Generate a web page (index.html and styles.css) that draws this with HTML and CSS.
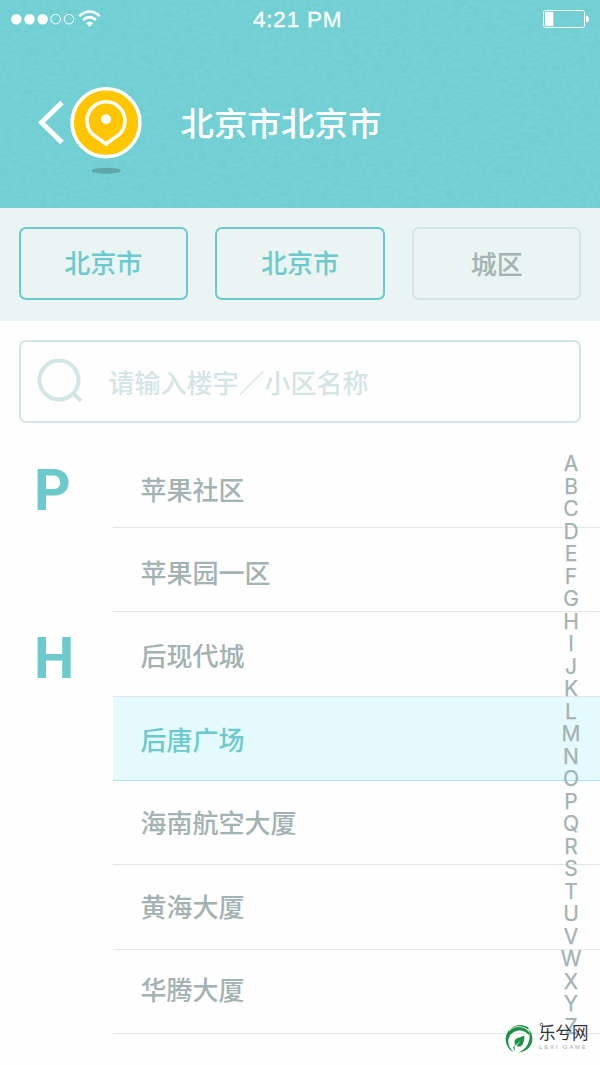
FILE: index.html
```html
<!DOCTYPE html>
<html lang="zh-CN">
<head>
<meta charset="utf-8">
<title>北京市北京市</title>
<link rel="stylesheet" href="styles.css">
</head>
<body>
<header class="header">
  <svg class="texture" width="600" height="208" aria-hidden="true">
    <filter id="fabric" x="0" y="0" width="100%" height="100%" color-interpolation-filters="sRGB">
      <feTurbulence type="fractalNoise" baseFrequency="0.15 0.3" numOctaves="3" seed="4"/>
      <feColorMatrix values="0 0 0 0 0.25  0 0 0 0 0.6  0 0 0 0 0.62  0.2 0 0 0 -0.07"/>
    </filter>
    <rect width="600" height="208" filter="url(#fabric)"/>
  </svg>
  <div class="status">
    <svg class="signal" width="104" height="20" viewBox="0 0 104 20">
      <g fill="#fff"><circle cx="16.3" cy="10.2" r="5.2"/><circle cx="29.5" cy="10.2" r="5.2"/><circle cx="42.7" cy="10.2" r="5.2"/></g>
      <g fill="none" stroke="#fff"><circle cx="55.7" cy="10.2" r="4.8"/><circle cx="69" cy="10.2" r="4.8"/></g>
      <g fill="none" stroke="#fff" stroke-width="2.5"><path d="M79.2 7.2Q89.5-2.2 99.8 7.2"/><path d="M83.1 11Q89.5 5.2 95.9 11"/></g>
      <path d="M86 14Q89.500 11.500 93 14L89.500 18Z" fill="#fff"/>
    </svg>
    <span class="time">4:21 PM</span>
    <svg class="battery" width="48" height="20" viewBox="0 0 48 20">
      <rect x="1.5" y="1.5" width="41" height="17" rx="2" fill="none" stroke="#fff"/>
      <rect x="3" y="3" width="8.3" height="14" fill="#fff"/>
      <path d="M44 6.5Q47 7 47 10T44 13.500Z" fill="#fff"/>
    </svg>
  </div>
  <div class="heading">
    <svg class="pin" width="110" height="92" viewBox="0 0 110 92">
      <path d="M26 18.500L5.500 38.500L26 58.500" fill="none" stroke="#fff" stroke-width="5"/>
      <circle cx="70" cy="38.700" r="33.900" fill="#ffc600" stroke="#fff" stroke-width="3.600"/>
      <path d="M70 60L56.800 50.500A19 19 0 1 1 83.200 50.500Z" fill="none" stroke="#fff" stroke-width="3.500"/>
      <circle cx="70" cy="35.300" r="5" fill="#fff"/>
      <ellipse cx="70.400" cy="86.700" rx="14.500" ry="3" fill="#60a5a8"/>
    </svg>
    <h1 class="title">北京市北京市</h1>
  </div>
</header>
<nav class="filters">
  <div class="filter">北京市</div>
  <div class="filter">北京市</div>
  <div class="filter filter-empty">城区</div>
</nav>
<main class="content">
  <div class="search">
    <svg class="lens" width="48" height="48" viewBox="0 0 48 48" fill="none" stroke="#d3e5e5" stroke-width="4"><circle cx="22" cy="22" r="19.500"/><path d="M35.500 34.500L44 43"/></svg>
    <span>请输入楼宇／小区名称</span>
  </div>
  <div class="places">
    <div class="row"><b class="initial">P</b><div class="place">苹果社区</div></div>
    <div class="row"><b class="initial"></b><div class="place">苹果园一区</div></div>
    <div class="row"><b class="initial">H</b><div class="place">后现代城</div></div>
    <div class="row"><b class="initial"></b><div class="place selected">后唐广场</div></div>
    <div class="row"><b class="initial"></b><div class="place">海南航空大厦</div></div>
    <div class="row"><b class="initial"></b><div class="place">黄海大厦</div></div>
    <div class="row"><b class="initial"></b><div class="place">华腾大厦</div></div>
  </div>
</main>
<aside class="index">
  <span>A</span><span>B</span><span>C</span><span>D</span><span>E</span><span>F</span><span>G</span><span>H</span><span>I</span><span>J</span><span>K</span><span>L</span><span>M</span><span>N</span><span>O</span><span>P</span><span>Q</span><span>R</span><span>S</span><span>T</span><span>U</span><span>V</span><span>W</span><span>X</span><span>Y</span><span>Z</span>
</aside>
<div class="brand">
  <svg width="32" height="32" viewBox="0 0 32 32">
    <path d="M26.500 5.500A14.500 14.500 0 1 0 12 30.500C4 24 4.500 13 13 9.500C19 7 25 10 27.500 14C28 10 26 7.500 22 6Q25 6 26.500 8Z" fill="#1d9245"/>
    <path d="M7 9C12 3 21 3 27 9" fill="none" stroke="#fefefe" stroke-width=".8"/>
    <path d="M27 7.500C34 16 30 30 16 30.500C27 27 29 16 27 7.500Z" fill="#1d9245"/>
    <path d="M22.500 13.500C22 25 18 25.500 14.500 24L18.500 18.500L13.500 23.500C10 15.500 17 16.500 22.500 13.500ZM13.500 23Q11.500 25 13.500 29.500Q9 25 13.500 23Z" fill="#1d9245"/>
  </svg>
  <div class="brand-text">
    <svg class="brand-dot" width="5" height="5" viewBox="0 0 5 5"><circle cx="2.500" cy="2.500" r="1.300" fill="none" stroke="#444" stroke-width=".8"/></svg>
    <span class="brand-name">乐兮网</span>
    <span class="brand-sub">LEXI GAME</span>
  </div>
</div>
</body>
</html>
```
FILE: styles.css
```css
* { box-sizing: border-box; }
body {
  position: relative;
  width: 600px;
  height: 1065px;
  margin: 0;
  overflow: hidden;
  background: #fefefe;
  color: #a3b2b2;
  font-family: "Liberation Sans", "Noto Sans CJK SC", sans-serif;
  font-size: 26px;
  font-weight: 500;
}
svg { display: block; flex: none; }
.header { position: relative; height: 208px; background: #74d2d6; color: #fff; }
.texture { position: absolute; inset: 0; }
.status {
  position: relative;
  display: flex;
  padding: 9px 10px 0 0;
  height: 40px;
}
.time { margin-left: 149px; font: 400 22.500px/21px "Liberation Sans", sans-serif; letter-spacing: .8px; -webkit-text-stroke: .3px #fff; }
.battery { margin-left: auto; }
.heading { position: relative; display: flex; padding: 44px 0 0 36px; }
.title {
  margin: 16px 0 0 34.500px;
  font-size: 33.5px;
  font-weight: 500;
  line-height: 50px;
}
.filters {
  display: flex;
  gap: 27.5px;
  height: 113px;
  padding: 18.500px 18.500px 21px;
  background: #e9f4f3;
}
.filter {
  flex: 1;
  border: 2px solid #6ccacd;
  border-radius: 7px;
  color: #6ccacd;
  line-height: 71px;
  text-align: center;
}
.filter-empty { border-color: #d3e5e5; color: #a3b2b2; line-height: 73px; }
.content { padding-top: 19px; }
.search {
  display: flex;
  align-items: center;
  height: 83px;
  margin: 0 19px;
  padding-left: 15.500px;
  border: 2px solid #d3e5e5;
  border-radius: 7px;
  color: #d3e5e5;
}
.search span { margin-left: 24px; padding-bottom: 1px; }
.places { padding-top: 20.500px; }
.row { display: flex; height: 84.350px; }
.initial {
  width: 112.500px;
  padding: 5px 0 0 34px;
  color: #6ccacd;
  font: 700 57px/84px "Roboto", sans-serif;
}
.place {
  flex: 1;
  padding: 28.200px 0 0 28px;
  border-bottom: 1px solid #e4e6e6;
  line-height: 38px;
}
.row:nth-child(2) .place { padding-top: 27.300px; }
.row:nth-child(3) .place { padding-top: 26px; }
.row:nth-child(4) .place { padding-top: 25.300px; }
.row:nth-child(5) .place { padding-top: 24.400px; }
.row:nth-child(6) .place { padding-top: 23.400px; }
.row:nth-child(7) .place { padding-top: 22.400px; }
.place.selected { background: #e5fafc; border-color: #afe3e7; color: #6ccacd; }
.index {
  position: absolute;
  top: 453px;
  left: 556px;
  display: flex;
  flex-direction: column;
  width: 30px;
  font: 400 21px/22.500px "Inter", sans-serif;
  -webkit-text-stroke: .25px #a3b2b2;
  text-align: center;
}
.brand {
  position: absolute;
  top: 1022px;
  left: 502px;
  display: flex;
}
.brand-text { position: relative; display: flex; flex-direction: column; margin-left: 5px; white-space: nowrap; }
.brand-dot { position: absolute; left: 0; top: 0; }
.brand-name { color: #333; font-size: 16.500px; font-weight: 400; line-height: 22px; }
.brand-sub { color: #aaa; font-size: 6px; line-height: 7px; letter-spacing: 1.800px; }
```
